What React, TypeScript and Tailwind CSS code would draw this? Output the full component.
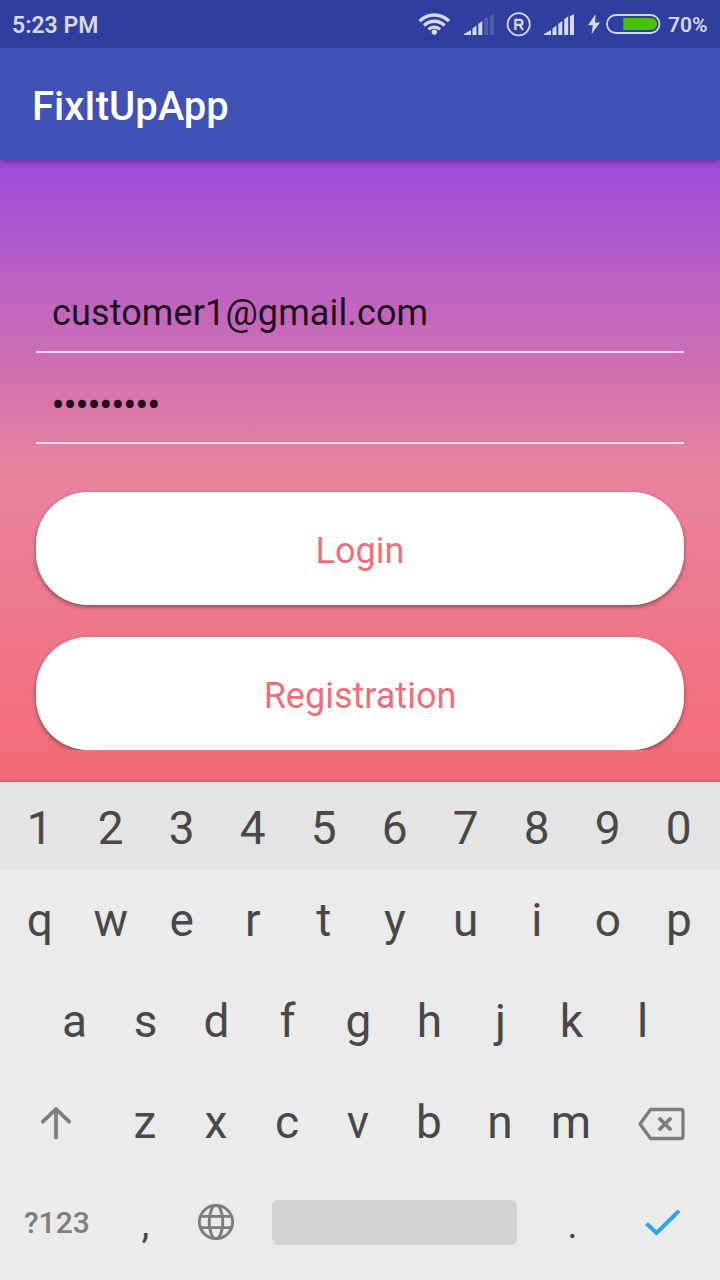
import React from "react";

function Key({ children }: { children: React.ReactNode }) {
  return <div className="flex w-[71px] shrink-0 items-center justify-center">{children}</div>;
}

function Letters({ keys }: { keys: string }) {
  return (
    <>
      {keys.split("").map((k) => (
        <Key key={k}>{k}</Key>
      ))}
    </>
  );
}

function Wifi() {
  return (
    <svg width="32" height="24" viewBox="418 12 32 24" fill="none" stroke="#d6d8ec" strokeWidth="3.3">
      <path d="M419.6 21.2 A20.5 20.5 0 0 1 449 21.2" />
      <path d="M424 25.5 A14.6 14.6 0 0 1 444.6 25.5" />
      <path d="M428.5 29.4 A8.4 8.4 0 0 1 440.1 29.4" />
      <circle cx="434.4" cy="32.1" r="2.7" fill="#d6d8ec" stroke="none" />
    </svg>
  );
}

function Signal({ weak = false }: { weak?: boolean }) {
  const dim = weak ? 0.2 : 1;
  return (
    <svg width="31" height="22" viewBox="0 0 31 22" fill="#d6d8ec">
      <path d="M0 21v-1l7-4v5z" />
      <path d="M8.5 21v-6.5l4-3V21z" />
      <path d="M14.3 21V10l4-3v14z" />
      <path d="M20.2 21V5.2l4-3V21z" opacity={dim} />
      <path d="M26 21V2.2L30 0v21z" opacity={dim} />
    </svg>
  );
}

function StatusBar() {
  return (
    <div className="z-20 flex h-12 shrink-0 items-center bg-[#303f9f] pl-[12px] pr-[12.5px] font-semibold text-[#d6d8ec]">
      <span className="pt-[2px] text-[23px] leading-none">5:23 PM</span>
      <div className="ml-auto flex items-center">
        <Wifi />
        <div className="ml-[14px] pt-[2px]"><Signal weak /></div>
        <svg className="ml-[11px]" width="26" height="26" viewBox="0 0 26 26" fill="none" stroke="#d6d8ec">
          <circle cx="12.7" cy="13.2" r="11.1" strokeWidth="1.7" />
          <path d="M9.4 19V8.9h4.5a2.5 2.5 0 0 1 0 5H9.4M13.8 13.9l3.1 5.1" strokeWidth="2.3" />
        </svg>
        <div className="ml-[12px] pt-[2px]"><Signal /></div>
        <svg className="ml-[13px]" width="12" height="20" viewBox="0 0 12 20" fill="#d6d8ec">
          <path d="M7.7 0L0 11.2h4.8L3.6 20 12 8.6H7z" />
        </svg>
        <svg className="ml-[6px]" width="55" height="20" viewBox="0 0 55 20">
          <rect x="1" y="1" width="52.5" height="18" rx="9" fill="none" stroke="#d6d8ec" strokeWidth="1.8" />
          <path d="M17.3 4H45a6 6 0 0 1 0 12H17.3z" fill="#49c300" />
        </svg>
        <span className="ml-[7px] pt-[2px] text-[21px] leading-none">70%</span>
      </div>
    </div>
  );
}

export default function App() {
  return (
    <div className="flex h-[1280px] w-[720px] flex-col overflow-hidden font-['Roboto',sans-serif]">
      <StatusBar />
      <header className="z-10 flex h-28 shrink-0 items-center bg-[#3f51b5] px-8 pt-[6px] text-[40px] font-medium leading-none text-white shadow-[0_2px_6px_rgba(0,0,0,0.3)]">
        FixItUpApp
      </header>
      <main className="flex h-[622px] shrink-0 flex-col bg-[linear-gradient(to_bottom,#9e4adc_0%,#e8839e_50%,#f36b75_100%)] px-9 pt-[115px] text-[36px]">
        <div className="flex h-[78px] items-center border-b-2 border-[#fbd9e3] px-4 tracking-[0.12px] text-[#1d0f1a]">customer1@gmail.com</div>
        <div className="flex h-[91px] items-center border-b-2 border-[#fbd9e3] px-[15.5px] pt-[16px] text-[39px] tracking-[-1.2px] text-[#1d0f1a]">•••••••••</div>
        <button className="mt-12 flex h-[113px] shrink-0 items-center justify-center rounded-[52px] bg-white pt-[5px] text-[#f26d7c] shadow-[0_2px_4px_rgba(0,0,0,0.4)]">
          Login
        </button>
        <div className="-mx-9 mt-[22px] h-[123px] shrink-0 overflow-hidden px-9 pt-[10px]">
          <button className="flex h-[113px] w-full items-center justify-center rounded-[52px] bg-white pt-[5px] text-[#f26d7c] shadow-[0_2px_4px_rgba(0,0,0,0.4)]">
            Registration
          </button>
        </div>
      </main>
      <section className="z-10 flex h-[498px] shrink-0 flex-col bg-[#ebebeb] text-[46px] leading-none text-[#484848] shadow-[0_0_4px_rgba(0,0,0,0.25)]">
        <div className="flex h-[88px] items-center bg-[#e4e4e4] pl-[4.3px] pt-[4px]"><Letters keys="1234567890" /></div>
        <div className="flex h-[101px] items-center pb-[2px] pl-[4.3px]"><Letters keys="qwertyuiop" /></div>
        <div className="flex h-[101px] items-center pb-[2px] pl-[39px]"><Letters keys="asdfghjkl" /></div>
        <div className="flex h-[101px] items-center pb-[2px]">
          <div className="w-[109.5px] pl-[40px] pt-[3px]">
            <svg width="32" height="34" viewBox="0 0 32 34" fill="none" stroke="#7d7d7d" strokeWidth="3.8" strokeLinecap="round" strokeLinejoin="round">
              <path d="M16 31.5V4M2.8 15.6L16 3l13.2 12.6" />
            </svg>
          </div>
          <Letters keys="zxcvbnm" />
          <svg className="ml-[31.5px] mt-[5px]" width="48" height="34" viewBox="0 0 48 34" fill="none" stroke="#7d7d7d" strokeWidth="3.3" strokeLinecap="round" strokeLinejoin="round">
            <path d="M12.5 2.5H43a2 2 0 0 1 2 2v25a2 2 0 0 1-2 2H12.5L2 17z" />
            <path d="M22 12l10 10m0-10l-10 10" strokeWidth="3.8" />
          </svg>
        </div>
        <div className="flex h-[99px] items-center">
          <div className="w-[110px] pl-[24px] text-[30px] font-medium text-[#7d7d7d]">?123</div>
          <Key><span className="pt-[2px] text-[40px]">,</span></Key>
          <svg className="-mt-px ml-[16px]" width="38" height="38" viewBox="0 0 38 38" fill="none" stroke="#7d7d7d" strokeWidth="2.9">
            <circle cx="19" cy="19" r="16.6" />
            <ellipse cx="19" cy="19" rx="6.8" ry="16.6" />
            <path d="M3.5 13.4h31M3.5 24.6h31" />
          </svg>
          <div className="ml-[37px] h-[45px] w-[245px] rounded-[6px] bg-[#d3d3d3]" />
          <div className="ml-[20px]"><Key><span className="pt-[5px] text-[38px]">.</span></Key></div>
          <svg className="ml-[36.5px]" width="36" height="28" viewBox="0 0 36 28" fill="none" stroke="#2aa5ea" strokeWidth="4">
            <path d="M1.5 14.5L11.5 24 34 1.8" />
          </svg>
        </div>
      </section>
    </div>
  );
}
